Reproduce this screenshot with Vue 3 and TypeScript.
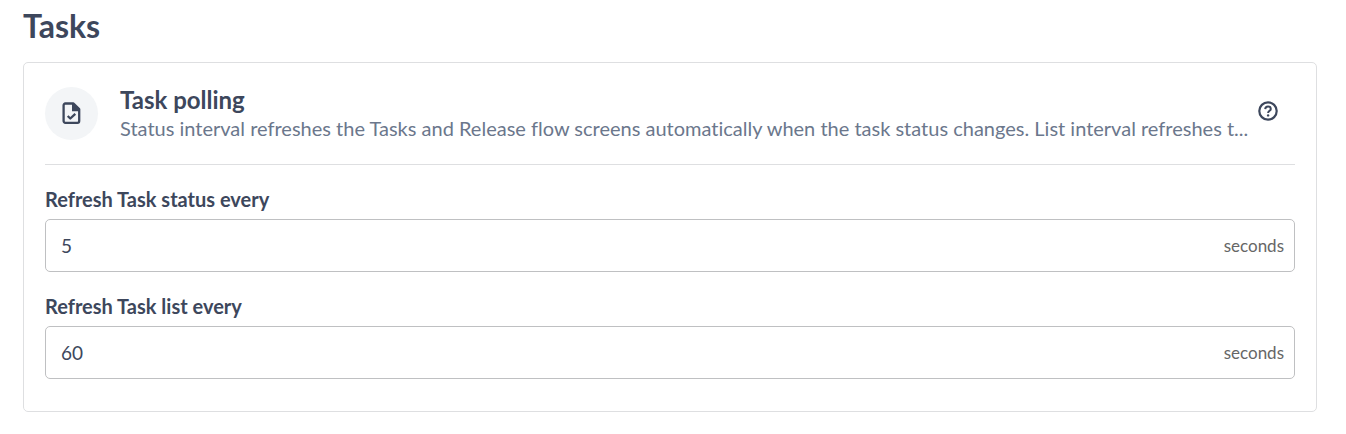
<script setup lang="ts">
import { ref } from 'vue'

interface IntervalField {
  id: string
  label: string
  value: string
}

const description =
  'Status interval refreshes the Tasks and Release flow screens automatically when the task status changes. List interval refreshes t...'

const fields = ref<IntervalField[]>([
  { id: 'status-interval', label: 'Refresh Task status every', value: '5' },
  { id: 'list-interval', label: 'Refresh Task list every', value: '60' },
])
</script>

<template>
  <main class="page">
    <h1 class="page-title">Tasks</h1>
    <section class="card">
      <header class="card-header">
        <span class="badge">
          <svg width="19" height="23" viewBox="0 0 19 23" fill="none" stroke="currentColor" stroke-width="2.300" stroke-linejoin="round" aria-hidden="true">
            <path d="M11.500 1.500H3.300A1.700 1.700 0 0 0 1.600 3.200v15.900A1.700 1.700 0 0 0 3.300 20.800h12.200a1.700 1.700 0 0 0 1.700-1.700V7z" />
            <path d="M10 1.500h1.500L17.200 7v2.200H10z" fill="currentColor" stroke="none" />
            <path d="M5.700 14l2.600 2.500 5-4.600" />
          </svg>
        </span>
        <div class="heading">
          <h2 class="card-title">Task polling</h2>
          <p class="description">{{ description }}</p>
        </div>
        <button class="help" type="button" aria-label="Help">
          <svg width="20" height="20" viewBox="0 0 20 20" fill="none" stroke="currentColor" stroke-width="2" aria-hidden="true">
            <circle cx="10" cy="10" r="8.700" stroke-width="2.200" />
            <path d="M7.200 8.100C7.300 6.500 8.400 5.500 10 5.500s2.800 1 2.800 2.400c0 1.900-2.700 2-2.700 4.200" />
            <circle cx="10.100" cy="14.400" r="1.200" fill="currentColor" stroke="none" />
          </svg>
        </button>
      </header>
      <div v-for="field in fields" :key="field.id" class="field">
        <label class="label" :for="field.id">{{ field.label }}</label>
        <div class="control">
          <input :id="field.id" v-model="field.value" class="input" type="text" inputmode="numeric" />
          <span class="suffix">seconds</span>
        </div>
      </div>
    </section>
  </main>
</template>

<style>
body {
  margin: 0;
  background: #fff;
}
</style>

<style scoped>
.page {
  padding: 6px 29px 22px 23px;
  color: #3d475c;
  font-family: Lato, "Liberation Sans", sans-serif;
  font-variant-ligatures: none;
}
.page-title {
  margin: 0 0 16px;
  font-size: 32px;
  line-height: 40px;
  font-weight: 700;
}
.card {
  padding: 22px 21px 32px;
  border: 1px solid #dedfe1;
  border-radius: 5px;
}
.card-header {
  display: flex;
  align-items: center;
  padding-bottom: 23px;
  border-bottom: 1px solid #dedfe1;
}
.badge {
  display: flex;
  flex: none;
  align-items: center;
  justify-content: center;
  width: 53px;
  height: 53px;
  margin-right: 22px;
  border-radius: 50%;
  background: #f3f5f7;
}
.heading {
  flex: 1;
  min-width: 0;
}
.card-title {
  margin: 0;
  font-size: 24px;
  line-height: 30px;
  font-weight: 700;
}
.description {
  margin: 0;
  overflow: hidden;
  color: #6b778c;
  font-size: 20px;
  line-height: 26px;
  text-overflow: ellipsis;
  white-space: nowrap;
}
.help {
  display: flex;
  flex: none;
  margin: 0 17px 5px 4px;
  padding: 0;
  border: 0;
  background: none;
  color: inherit;
}
.field {
  padding-top: 20px;
}
.label {
  display: block;
  margin-bottom: 6px;
  font-size: 20px;
  line-height: 28px;
  font-weight: 700;
}
.control {
  display: flex;
  align-items: center;
  box-sizing: border-box;
  height: 53px;
  padding: 0 10px 1px 15px;
  border: 1px solid #bfc0c2;
  border-radius: 5px;
}
.input {
  flex: 1;
  min-width: 0;
  padding: 0;
  border: 0;
  outline: 0;
  background: none;
  color: inherit;
  font: inherit;
  font-size: 19px;
}
.suffix {
  color: #666;
  font-size: 17px;
}
</style>
